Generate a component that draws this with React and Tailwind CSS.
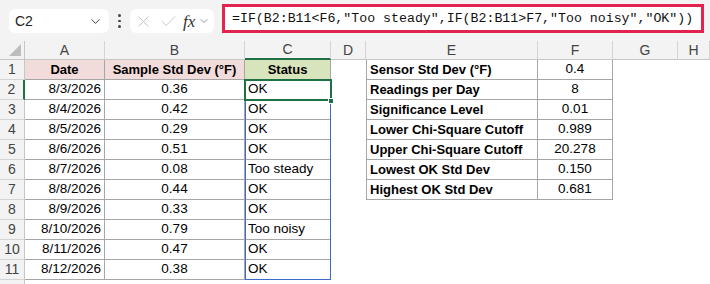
import { ChevronDown, X, Check } from 'lucide-react';

const COLS = ['A', 'B', 'C', 'D', 'E', 'F', 'G', 'H'];

const DATA = [
  ['8/3/2026', '0.36', 'OK'],
  ['8/4/2026', '0.42', 'OK'],
  ['8/5/2026', '0.29', 'OK'],
  ['8/6/2026', '0.51', 'OK'],
  ['8/7/2026', '0.08', 'Too steady'],
  ['8/8/2026', '0.44', 'OK'],
  ['8/9/2026', '0.33', 'OK'],
  ['8/10/2026', '0.79', 'Too noisy'],
  ['8/11/2026', '0.47', 'OK'],
  ['8/12/2026', '0.38', 'OK'],
];

const PARAMS = [
  ['Sensor Std Dev (°F)', '0.4'],
  ['Readings per Day', '8'],
  ['Significance Level', '0.01'],
  ['Lower Chi-Square Cutoff', '0.989'],
  ['Upper Chi-Square Cutoff', '20.278'],
  ['Lowest OK Std Dev', '0.150'],
  ['Highest OK Std Dev', '0.681'],
];

const FORMULA = '=IF(B2:B11<F6,"Too steady",IF(B2:B11>F7,"Too noisy","OK"))';

// table cell border colour
const tb = 'border-[#a6a6a6]';

function FormulaBar() {
  return (
    <div className="flex h-[41px] items-start bg-[#f3f3f3]">
      <div className="ml-[9px] mt-[9px] flex h-[24px] w-[100px] items-center justify-between rounded-md bg-white pl-[6px] pr-[6px] text-[14px] text-[#222]">
        <span>C2</span>
        <ChevronDown size={15} strokeWidth={1.6} className="text-[#444]" />
      </div>
      <div className="ml-[9px] mt-[14px] flex w-[3px] flex-col gap-[3px]">
        <span className="h-[2.5px] w-[2.5px] rounded-full bg-[#444]" />
        <span className="h-[2.5px] w-[2.5px] rounded-full bg-[#444]" />
        <span className="h-[2.5px] w-[2.5px] rounded-full bg-[#444]" />
      </div>
      <div className="ml-[9px] mt-[9px] flex h-[24px] w-[84px] items-center rounded-md bg-white pl-[4px] text-[#bdbdbd]">
        <X size={19} strokeWidth={1.1} />
        <Check size={19} strokeWidth={1.1} className="ml-[6px]" />
        <span className="ml-[5px] font-['Liberation_Serif',serif] text-[17px] italic leading-none text-[#333]">fx</span>
        <ChevronDown size={12} strokeWidth={1.6} className="ml-[3px] text-[#777]" />
      </div>
      <div className="ml-[8px] mt-[4px] flex h-[29px] w-[482px] items-center border-[3px] border-[#e3234f] bg-white pl-[7px] font-['Liberation_Mono',monospace] text-[13.25px] text-[#111]">
        {FORMULA}
      </div>
    </div>
  );
}

function Cell({ className = '', children }) {
  return (
    <div className={`flex h-full items-center overflow-hidden whitespace-nowrap px-[3px] ${className}`}>
      {children}
    </div>
  );
}

export default function App() {
  const hdr = 'flex items-center justify-center bg-[#f3f3f3] text-[14px] text-[#444] font-["Liberation_Sans",sans-serif]';

  const rows = [];
  for (let r = 1; r <= 11; r++) {
    const selected = r === 2;
    rows.push(
      <div
        key={`rh${r}`}
        className={`${hdr} border-b border-[#d4d4d4] ${selected ? 'border-r-2 border-r-[#1e7145] bg-[#d3d3d3] text-[#1e7145]' : 'border-r border-r-[#c6c6c6]'}`}
      >
        {r}
      </div>
    );
    // A, B, C
    if (r === 1) {
      rows.push(<Cell key="a1" className={`justify-center border-r border-b ${tb} bg-[#f2dcdb] text-[13px] font-bold`}>Date</Cell>);
      rows.push(<Cell key="b1" className={`justify-center border-r border-b ${tb} bg-[#f2dcdb] text-[13px] font-bold`}>Sample Std Dev (°F)</Cell>);
      rows.push(<Cell key="c1" className={`justify-center border-r border-b ${tb} bg-[#d8e4bc] text-[13px] font-bold`}>Status</Cell>);
    } else {
      const d = DATA[r - 2];
      rows.push(<Cell key={`a${r}`} className={`justify-end border-r border-b ${tb}`}>{d[0]}</Cell>);
      rows.push(<Cell key={`b${r}`} className={`justify-center border-r border-b ${tb}`}>{d[1]}</Cell>);
      rows.push(<Cell key={`c${r}`} className={`border-r border-b ${tb}`}>{d[2]}</Cell>);
    }
    // D
    rows.push(<Cell key={`d${r}`} />);
    // E, F
    if (r <= 7) {
      const p = PARAMS[r - 1];
      rows.push(<Cell key={`e${r}`} className={`border-l border-r border-b ${tb} text-[13px] font-bold`}>{p[0]}</Cell>);
      rows.push(<Cell key={`f${r}`} className={`justify-center border-r border-b ${tb}`}>{p[1]}</Cell>);
    } else {
      rows.push(<Cell key={`e${r}`} />);
      rows.push(<Cell key={`f${r}`} />);
    }
    rows.push(<Cell key={`g${r}`} />);
    rows.push(<Cell key={`h${r}`} />);
  }

  return (
    <div className="h-[284px] w-[710px] overflow-hidden bg-white font-['Liberation_Sans',sans-serif] text-[13.5px] text-black">
      <FormulaBar />
      <div className="relative grid h-[243px] grid-cols-[25px_80px_140px_86px_35px_172px_75px_65px_1fr] grid-rows-[19px_repeat(11,20px)_1fr]">
        {/* corner */}
        <div className="relative border-r border-b border-[#c6c6c6] bg-[#f3f3f3]">
          <div className="absolute right-[3px] bottom-[3px] h-0 w-0 border-b-[12px] border-l-[12px] border-b-[#bdbdbd] border-l-transparent" />
        </div>
        {COLS.map((c) => (
          <div
            key={c}
            className={`${hdr} border-r border-r-[#d4d4d4] ${c === 'C' ? 'border-b-2 border-b-[#1e7145] bg-[#d3d3d3] text-[#1e6b48]' : 'border-b border-b-[#c6c6c6]'}`}
          >
            {c}
          </div>
        ))}
        {rows}
        <div className="border-r border-[#c6c6c6] bg-[#f3f3f3]" />

        {/* spilled range outline */}
        <div className="pointer-events-none absolute left-[245px] top-[39px] h-[200px] w-[86px] border border-[#3a6bc9]" />
        {/* active cell */}
        <div className="pointer-events-none absolute left-[244px] top-[38px] h-[22px] w-[88px] border-2 border-[#1e7145]" />
        <div className="pointer-events-none absolute left-[328px] top-[57px] h-[6px] w-[6px] border border-white bg-[#1e7145]" />
      </div>
    </div>
  );
}
